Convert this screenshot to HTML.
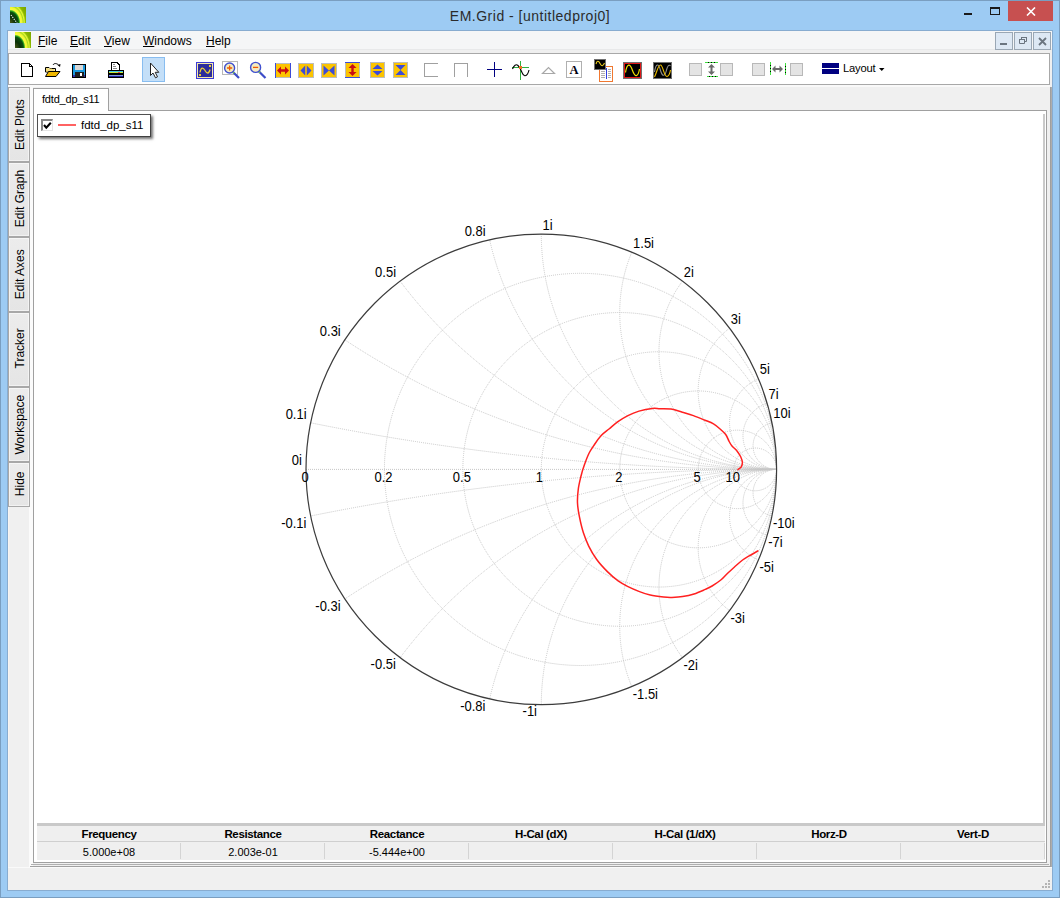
<!DOCTYPE html>
<html><head><meta charset="utf-8">
<style>
*{box-sizing:border-box}
html,body{margin:0;padding:0}
body{width:1060px;height:898px;overflow:hidden;position:relative;background:#9dcbf3;font-family:"Liberation Sans",sans-serif;color:#000}
.a{position:absolute}
#frame{left:0;top:0;width:1060px;height:898px;border:1px solid #7a9ec0}
#title{left:0;top:9px;width:1060px;text-align:center;font-size:14px;letter-spacing:.5px;color:#2b2b2b;line-height:14px;white-space:nowrap}
#client{left:7px;top:30px;width:1046px;height:861px;border:1px solid #88acd0;background:#f0f0f0}
#menubar{left:8px;top:31px;width:1044px;height:18px;background:#f5f6f7}
#menuband{left:8px;top:49px;width:1044px;height:4px;background:#efefef;border-top:1px solid #e8e9ea}
.mi{position:absolute;top:35px;font-size:12px;line-height:13px;white-space:nowrap}
.mi u{text-decoration:underline;text-decoration-thickness:1px;text-underline-offset:0.7px}
.mdib{position:absolute;top:32px;width:18px;height:18px;border:1px solid #9aa7b4;background:#dde8f4}
#toolbar{left:8px;top:53px;width:1042px;height:32px;background:#fff;border:1px solid #a8a8a8}
</style></head><body>
<div id="frame" class="a"></div>
<!-- title icon -->
<svg class="a" style="left:10px;top:7px" width="16" height="16" viewBox="0 0 16 16">
<defs><radialGradient id="ig" cx="0" cy="16" r="20" gradientUnits="userSpaceOnUse" gradientTransform="translate(0,16) scale(1,1.3) translate(0,-16)">
<stop offset="0" stop-color="#4a5a18"/><stop offset=".25" stop-color="#0a3008"/><stop offset=".42" stop-color="#0c5010"/><stop offset=".47" stop-color="#30b020"/><stop offset=".52" stop-color="#f8f840"/><stop offset=".6" stop-color="#f0f830"/><stop offset=".66" stop-color="#a8d820"/><stop offset=".71" stop-color="#e8f838"/><stop offset=".78" stop-color="#8ab800"/><stop offset="1" stop-color="#78a400"/></radialGradient></defs>
<rect width="16" height="16" fill="url(#ig)"/><path d="M1,8 L7,16" stroke="#e8e8e8" stroke-width="1.2" stroke-dasharray="1.2 1.2"/>
</svg>
<div id="title" class="a">EM.Grid - [untitledproj0]</div>
<!-- caption buttons -->
<div class="a" style="left:964px;top:13px;width:8px;height:2px;background:#1a1a1a"></div>
<div class="a" style="left:990px;top:7px;width:10px;height:8px;border:1px solid #1a1a1a;border-top-width:2px"></div>
<div class="a" style="left:1008px;top:1px;width:45px;height:20px;background:#c75050"></div>
<svg class="a" style="left:1026px;top:7px" width="10" height="9" viewBox="0 0 10 9"><path d="M1,0.5 L9,8.5 M9,0.5 L1,8.5" stroke="#fff" stroke-width="1.6"/></svg>
<div id="client" class="a"></div>
<div id="menubar" class="a"></div>
<div id="menuband" class="a"></div>
<svg class="a" style="left:15px;top:32px" width="16" height="16" viewBox="0 0 16 16">
<rect width="16" height="16" fill="url(#ig)"/>
</svg>
<div class="mi" style="left:38px"><u>F</u>ile</div>
<div class="mi" style="left:70px"><u>E</u>dit</div>
<div class="mi" style="left:104px"><u>V</u>iew</div>
<div class="mi" style="left:143px"><u>W</u>indows</div>
<div class="mi" style="left:206px"><u>H</u>elp</div>
<div class="mdib" style="left:995px"><div class="a" style="left:4px;top:10px;width:7px;height:2px;background:#6b7580"></div></div>
<div class="mdib" style="left:1014px"><svg class="a" style="left:3px;top:2px" width="10" height="10" viewBox="0 0 10 10"><path d="M3.5,2.5 h5 v4 h-2 M1.5,4.5 h5 v4 h-5 z M3.5,2.5 v2" fill="none" stroke="#6b7580" stroke-width="1"/><path d="M3,2 h6 v1 h-6z M1,4 h6 v1 h-6z" fill="#6b7580"/></svg></div>
<div class="mdib" style="left:1033px"><svg class="a" style="left:4px;top:4px" width="9" height="9" viewBox="0 0 9 9"><path d="M1,1 L8,8 M8,1 L1,8" stroke="#6b7580" stroke-width="1.8"/></svg></div>
<div id="toolbar" class="a"></div>
<svg class="a" style="left:0;top:0" width="1060" height="90" viewBox="0 0 1060 90" shape-rendering="crispEdges">
<!-- new doc -->
<path d="M21.5,63.5 H29.5 L32.5,66.5 V76.5 H21.5 Z" fill="#fff" stroke="#000" stroke-width="1"/>
<path d="M29.5,63.5 V66.5 H32.5" fill="none" stroke="#000" stroke-width="1"/>
<!-- open folder -->
<g shape-rendering="auto">
<path d="M45.5,67.5 H49 L50,68.5 H55.5 V72 H45.5 Z" fill="#f8f0b0" stroke="#000" stroke-width="1"/>
<path d="M46,68.5 h2 v1 h-2z M48,69.5 h2 v1 h-2z M50,68.5 h2 v1 h-2z M52,69.5 h2 v1 h-2z M46,70.5 h2 v1 h-2z M50,70.5 h2 v1 h-2z" fill="#e8c850"/>
<path d="M45.5,76.5 L48.5,71.5 H60 L56,76.5 Z" fill="#f0b800" stroke="#000" stroke-width="1"/>
<path d="M53,65 C54,63 57,63 59,65.5" fill="none" stroke="#000" stroke-width="1"/>
<path d="M57.5,65 L60,67 L60.5,64 Z" fill="#000"/>
</g>
<!-- floppy -->
<rect x="72" y="64" width="14" height="14" fill="#000"/>
<rect x="73" y="65" width="12" height="12" fill="#1a9ae0"/>
<rect x="75" y="65" width="8" height="5" fill="#d8d8d8"/>
<rect x="75" y="72" width="9" height="5" fill="#202020"/>
<rect x="80" y="73" width="2" height="3" fill="#fff"/>
<rect x="73" y="75" width="2" height="2" fill="#3030b0"/><rect x="84" y="75" width="1" height="2" fill="#3030b0"/>
<!-- printer -->
<path d="M111.5,62.5 H117 L119.5,65 V70.5 H111.5 Z" fill="#fff" stroke="#000"/>
<rect x="113" y="64" width="2" height="1" fill="#888"/><rect x="113" y="66" width="3" height="1" fill="#888"/><rect x="113" y="68" width="4" height="1" fill="#888"/>
<rect x="108" y="70" width="16" height="8" rx="1" fill="#000"/>
<rect x="109" y="71" width="14" height="2" fill="#40c8f0"/>
<rect x="109" y="72" width="14" height="1" fill="#c8e830"/>
<rect x="118" y="72" width="2" height="1" fill="#f04040"/>
<rect x="109" y="74" width="14" height="1" fill="#000"/>
<rect x="109" y="75" width="14" height="1" fill="#8098e0"/>
<rect x="109" y="76" width="14" height="1" fill="#2020a0"/>
<!-- select pressed -->
<rect x="142.5" y="57.5" width="22" height="24" fill="#c4dff8" stroke="#88bdf0"/>
<path d="M150.5,63 V75.5 L153,73 L155.5,77.8 L157.5,76.8 L155.2,72.3 H158.8 Z" fill="#fff" stroke="#222" stroke-width="1" shape-rendering="auto" stroke-linejoin="miter"/>
<!-- sine box -->
<rect x="196" y="62" width="18" height="17" fill="#3c3cd8"/>
<rect x="197" y="63" width="16" height="15" fill="#f4e8a8"/>
<rect x="198" y="64" width="14" height="13" fill="#2c2c9c"/>
<path d="M200,72.5 C201,67 203,67 205,70.5 C207,74 209,74 210,69.5" fill="none" stroke="#f0d030" stroke-width="1.3" shape-rendering="auto"/>
<rect x="209" y="65" width="2" height="2" fill="#f0d030"/><rect x="199" y="74" width="2" height="2" fill="#f0d030"/>
<!-- zoom in -->
<rect x="222.5" y="61.5" width="15" height="13" fill="none" stroke="#b8b8b8"/>
<g shape-rendering="auto">
<line x1="233" y1="72" x2="239" y2="78" stroke="#3c4cc8" stroke-width="2.2"/>
<line x1="232.8" y1="71.8" x2="234" y2="73" stroke="#80d040" stroke-width="2"/>
<circle cx="229.6" cy="68" r="5" fill="#f4ecc0" stroke="#4050d0" stroke-width="1.4"/>
<path d="M227,68 h5.2 M229.6,65.4 v5.2" stroke="#f05a00" stroke-width="1.3"/>
</g>
<!-- zoom out -->
<g shape-rendering="auto">
<line x1="259" y1="71.5" x2="265.5" y2="78" stroke="#3c4cc8" stroke-width="2.2"/>
<line x1="258.8" y1="71.3" x2="260" y2="72.5" stroke="#80d040" stroke-width="2"/>
<circle cx="255.6" cy="67.4" r="5" fill="#f4ecc0" stroke="#4050d0" stroke-width="1.4"/>
<path d="M253,67.4 h5.2" stroke="#f05a00" stroke-width="1.3"/>
</g>
<!-- yellow boxes -->
<rect x="275.5" y="63.5" width="15" height="14" fill="#fcc400" stroke="#bdbdbd"/>
<rect x="275" y="63" width="1" height="15" fill="#3c4cd8"/><rect x="290" y="63" width="1" height="15" fill="#3c4cd8"/>
<g shape-rendering="auto">
<path d="M277,70.5 L281,66.5 V69.3 H285 V66.5 L289,70.5 L285,74.5 V71.7 H281 V74.5 Z" fill="#c80c14"/>
</g>
<rect x="298.5" y="63.5" width="15" height="14" fill="#fcc400" stroke="#bdbdbd"/>
<g shape-rendering="auto"><path d="M300.5,70.5 L305.2,65.5 V75.5 Z M311.5,70.5 L306.8,65.5 V75.5 Z" fill="#3c4cd8"/></g>
<rect x="321.5" y="63.5" width="15" height="14" fill="#fcc400" stroke="#bdbdbd"/>
<g shape-rendering="auto"><path d="M323.5,65.5 L329,70.5 L323.5,75.5 Z M334.5,65.5 L329,70.5 L334.5,75.5 Z" fill="#3c4cd8"/></g>
<rect x="345.5" y="62.5" width="14" height="15" fill="#fcc400" stroke="#bdbdbd"/>
<rect x="345" y="62" width="15" height="1" fill="#3c4cd8"/><rect x="345" y="77" width="15" height="1" fill="#3c4cd8"/>
<g shape-rendering="auto"><path d="M352.5,64 L356.5,68 H353.7 V72 H356.5 L352.5,76 L348.5,72 H351.3 V68 H348.5 Z" fill="#c80c14"/></g>
<rect x="370.5" y="62.5" width="14" height="15" fill="#fcc400" stroke="#bdbdbd"/>
<g shape-rendering="auto"><path d="M372.5,69 L377.5,64.5 L382.5,69 Z M372.5,71 L377.5,75.5 L382.5,71 Z" fill="#3c4cd8"/></g>
<rect x="393.5" y="62.5" width="14" height="15" fill="#fcc400" stroke="#bdbdbd"/>
<g shape-rendering="auto"><path d="M395.5,65 H405.5 L400.5,70 Z M395.5,75 H405.5 L400.5,70 Z" fill="#3c4cd8"/></g>
<!-- brackets -->
<path d="M438,63.5 H424.5 V76.5 H438" fill="none" stroke="#a0a0a0"/>
<path d="M454.5,77 V63.5 H467.5 V77" fill="none" stroke="#a0a0a0"/>
<!-- plus -->
<rect x="487" y="69" width="15" height="1" fill="#000080"/><rect x="494" y="62" width="1" height="15" fill="#000080"/>
<rect x="487" y="69.5" width="15" height="0.6" fill="#000080" opacity=".5"/>
<!-- tracker -->
<rect x="520" y="61" width="1" height="19" fill="#30b040"/>
<rect x="512" y="67" width="17" height="1" fill="#30b040"/>
<g shape-rendering="auto">
<path d="M512.5,69 C514,65.5 516,63.5 518,65.5 C520,67.5 521,70 522,72.5 C523.5,76.5 526,76.5 527.5,74 C528.5,72.5 528.8,71 529,70" fill="none" stroke="#000" stroke-width="1.1"/>
</g>
<rect x="519" y="66" width="3" height="3" fill="#f07020"/>
<!-- triangle -->
<path d="M542.5,73.5 L548.5,67.5 L554.5,73.5 Z" fill="none" stroke="#a8a8a8" stroke-width="1.2" shape-rendering="auto"/>
<!-- A box -->
<rect x="566.5" y="61.5" width="15" height="16" fill="#fff" stroke="#b0b0b0"/>
<text x="573.9" y="74.3" text-anchor="middle" font-family="Liberation Serif, serif" font-weight="bold" font-size="12.5" fill="#000010" shape-rendering="auto">A</text>
<!-- legend icon -->
<rect x="599.5" y="66.5" width="13" height="15" fill="#fff" stroke="#f07830"/>
<rect x="601" y="69" width="4" height="1" fill="#b0b0b0"/><rect x="601" y="71" width="4" height="1" fill="#b0b0b0"/><rect x="601" y="73" width="4" height="1" fill="#b0b0b0"/><rect x="601" y="75" width="4" height="1" fill="#b0b0b0"/><rect x="601" y="77" width="4" height="1" fill="#b0b0b0"/>
<rect x="608" y="69" width="3" height="1" fill="#b0b0b0"/><rect x="608" y="71" width="3" height="1" fill="#b0b0b0"/><rect x="608" y="73" width="3" height="1" fill="#b0b0b0"/><rect x="608" y="75" width="3" height="1" fill="#b0b0b0"/><rect x="608" y="77" width="3" height="1" fill="#b0b0b0"/>
<rect x="606" y="68" width="1" height="11" fill="#3040e0"/>
<rect x="594.5" y="59.5" width="11" height="10" fill="#000" stroke="#707070"/>
<path d="M596,64 C597,60.5 598.5,60.5 600,63.5 C601.5,66.5 603,66.5 604.5,63" fill="none" stroke="#f0d020" stroke-width="1.1" shape-rendering="auto"/>
<!-- red sine -->
<rect x="623" y="62" width="19" height="17" fill="#707070"/>
<rect x="624" y="63" width="17" height="15" fill="#e01818"/>
<rect x="625" y="64" width="15" height="13" fill="#000"/>
<path d="M625.5,72.5 C627,63 630,63 632.5,70.5 C635,77.5 638,77.5 639.5,69" fill="none" stroke="#f0e000" stroke-width="1.2" shape-rendering="auto"/>
<!-- dual sine -->
<rect x="653" y="62" width="19" height="17" fill="#707070"/>
<rect x="654" y="63" width="17" height="15" fill="#000"/>
<g shape-rendering="auto" fill="none" stroke-width="1.1">
<path d="M654.5,72 C656,63 658.5,63 660.5,70.5 C662.5,77 665,77 666.5,70 C667.5,66 669,64 670.5,66" stroke="#909090"/>
<path d="M654.5,77 C657,72 658,65 660.5,65 C663,65 664,77 667,76.5 C669,76 670,73 670.5,70" stroke="#f0c000"/>
</g>
<!-- gray squares + spacing icons -->
<rect x="689.5" y="63.5" width="12" height="12" fill="#e4e4e4" stroke="#b8b8b8"/>
<rect x="720.5" y="63.5" width="12" height="12" fill="#e4e4e4" stroke="#b8b8b8"/>
<rect x="752.5" y="63.5" width="12" height="12" fill="#e4e4e4" stroke="#b8b8b8"/>
<rect x="790.5" y="63.5" width="12" height="12" fill="#e4e4e4" stroke="#b8b8b8"/>
<g>
<rect x="705" y="62" width="13" height="1" fill="#40e040"/><rect x="708" y="62" width="1" height="1" fill="#000"/><rect x="711" y="62" width="1" height="1" fill="#000"/><rect x="714" y="62" width="1" height="1" fill="#000"/>
<rect x="707" y="76" width="11" height="1" fill="#40e040"/><rect x="709" y="76" width="1" height="1" fill="#000"/><rect x="712" y="76" width="1" height="1" fill="#000"/><rect x="715" y="76" width="1" height="1" fill="#000"/>
<path d="M711.5,64 L715,67.5 H712.5 V71.5 H715 L711.5,75 L708,71.5 H710.5 V67.5 H708 Z" fill="#6a6a6a" shape-rendering="auto"/>
<rect x="770" y="62" width="1" height="13" fill="#40e040"/><rect x="770" y="65" width="1" height="1" fill="#000"/><rect x="770" y="68" width="1" height="1" fill="#000"/><rect x="770" y="71" width="1" height="1" fill="#000"/>
<rect x="785" y="63" width="1" height="12" fill="#40e040"/><rect x="785" y="66" width="1" height="1" fill="#000"/><rect x="785" y="69" width="1" height="1" fill="#000"/><rect x="785" y="72" width="1" height="1" fill="#000"/>
<path d="M772,69 L775.5,65.5 V68 H779.5 V65.5 L783,69 L779.5,72.5 V70 H775.5 V72.5 Z" fill="#6a6a6a" shape-rendering="auto"/>
</g>
<!-- layout -->
<rect x="822" y="63" width="17" height="5" fill="#000080"/>
<rect x="822" y="69" width="17" height="5" fill="#000080"/>
<path d="M879,68 H884.5 L881.75,71 Z" fill="#000" shape-rendering="auto"/>
</svg>
<div class="a" style="left:843px;top:62px;font-size:11.2px;line-height:12px;white-space:nowrap;letter-spacing:-0.2px">Layout</div>

<div class="a" style="left:8px;top:85px;width:1044px;height:782px;background:#f0f0f0"></div>
<div class="a" style="left:8px;top:85px;width:1px;height:782px;background:#f8f5f2"></div>
<div class="a" style="left:29px;top:85px;width:4px;height:782px;background:#fbfbfb"></div>
<div class="a" style="left:8px;top:85px;width:1042px;height:2px;background:#f9f9f9"></div>
<style>
.lt{position:absolute;left:8px;width:22px;height:75px;border:1px solid #a8a8a8;box-shadow:inset 0 0 0 1px rgba(255,255,255,.5);background:linear-gradient(#ececec,#e5e5e5)}
</style>
<div class="lt" style="top:87px"></div>
<div class="lt" style="top:162px"></div>
<div class="lt" style="top:237px"></div>
<div class="lt" style="top:312px"></div>
<div class="lt" style="top:387px"></div>
<div class="lt" style="top:462px;height:45px"></div>
<svg class="a" style="left:0;top:0" width="40" height="520" viewBox="0 0 40 520">
<g font-family="Liberation Sans, sans-serif" font-size="12" fill="#000">
<text transform="translate(24.2,150.0) rotate(-90)">Edit Plots</text>
<text transform="translate(24.2,227.3) rotate(-90)">Edit Graph</text>
<text transform="translate(24.2,299.3) rotate(-90)">Edit Axes</text>
<text transform="translate(24.2,368.5) rotate(-90)">Tracker</text>
<text transform="translate(24.2,454.6) rotate(-90)">Workspace</text>
<text transform="translate(24.2,496.2) rotate(-90)">Hide</text>
</g>
</svg>

<!-- outer stacked borders -->
<div class="a" style="left:1050px;top:87px;width:2px;height:780px;background:linear-gradient(to right,#999,#b4b4b4)"></div>
<div class="a" style="left:30px;top:866px;width:1021px;height:1px;background:#a0a0a0"></div>
<div class="a" style="left:31px;top:864px;width:1018px;height:1px;background:#b0b0b0"></div>
<!-- tab -->
<div class="a" style="left:33px;top:88px;width:76px;height:23px;border:1px solid #a0a0a0;border-bottom:none;background:#fff"></div>
<div class="a" style="left:42px;top:93px;font-size:11px;line-height:12px;white-space:nowrap;letter-spacing:-0.2px">fdtd_dp_s11</div>
<!-- plot window -->
<div class="a" style="left:33px;top:110px;width:1014px;height:753px;border:1px solid #a0a0a0;border-top:none;background:#fff"></div>
<div class="a" style="left:108px;top:110px;width:939px;height:1px;background:#a0a0a0"></div>
<div class="a" style="left:1043px;top:114px;width:2px;height:710px;background:#cacaca"></div>
<!-- legend -->
<div class="a" style="left:37px;top:114px;width:114px;height:23px;border:1px solid #505050;border-right-color:#404040;border-bottom-color:#404040;background:#fff;box-shadow:2px 2px 2.5px rgba(0,0,0,.55)"></div>
<div class="a" style="left:41px;top:119px;width:12px;height:12px;border:2px solid #868686;border-right:1px solid #e4e4e4;border-bottom:1px solid #e4e4e4;background:#fff"></div>
<svg class="a" style="left:43px;top:121px" width="9" height="9" viewBox="0 0 9 9"><path d="M1,4 L3.3,6.6 L7.8,1.8" fill="none" stroke="#000" stroke-width="2.1"/></svg>
<div class="a" style="left:58px;top:124px;width:18px;height:2px;background:#ff6262"></div>
<div class="a" style="left:81px;top:119px;font-size:11.5px;line-height:12px;white-space:nowrap">fdtd_dp_s11</div>

<svg id="smith" width="1060" height="898" viewBox="0 0 1060 898" style="position:absolute;left:0;top:0">
<defs><clipPath id="cl"><circle cx="541.3" cy="469.4" r="235.3"/></clipPath></defs>
<g clip-path="url(#cl)" fill="none" stroke="#c6c6c6" stroke-width="1" stroke-dasharray="1 1">
<circle cx="580.52" cy="469.40" r="196.08"/>
<circle cx="619.73" cy="469.40" r="156.87"/>
<circle cx="658.95" cy="469.40" r="117.65"/>
<circle cx="698.17" cy="469.40" r="78.43"/>
<circle cx="737.38" cy="469.40" r="39.22"/>
<circle cx="755.21" cy="469.40" r="21.39"/>
<circle cx="776.60" cy="-1883.60" r="2353.00"/>
<circle cx="776.60" cy="2822.40" r="2353.00"/>
<circle cx="776.60" cy="-314.93" r="784.33"/>
<circle cx="776.60" cy="1253.73" r="784.33"/>
<circle cx="776.60" cy="-1.20" r="470.60"/>
<circle cx="776.60" cy="940.00" r="470.60"/>
<circle cx="776.60" cy="175.27" r="294.12"/>
<circle cx="776.60" cy="763.52" r="294.12"/>
<circle cx="776.60" cy="234.10" r="235.30"/>
<circle cx="776.60" cy="704.70" r="235.30"/>
<circle cx="776.60" cy="312.53" r="156.87"/>
<circle cx="776.60" cy="626.27" r="156.87"/>
<circle cx="776.60" cy="351.75" r="117.65"/>
<circle cx="776.60" cy="587.05" r="117.65"/>
<circle cx="776.60" cy="390.97" r="78.43"/>
<circle cx="776.60" cy="547.83" r="78.43"/>
<circle cx="776.60" cy="422.34" r="47.06"/>
<circle cx="776.60" cy="516.46" r="47.06"/>
<circle cx="776.60" cy="435.79" r="33.61"/>
<circle cx="776.60" cy="503.01" r="33.61"/>
<circle cx="776.60" cy="445.87" r="23.53"/>
<circle cx="776.60" cy="492.93" r="23.53"/>
<line x1="306.00" y1="469.40" x2="776.60" y2="469.40"/>
</g>
<circle cx="541.3" cy="469.4" r="235.3" fill="none" stroke="#3c3c3c" stroke-width="1.2"/>
<path d="M757.9,550.9 C756.5,551.7 752.1,554.2 749.6,555.7 C747.1,557.2 745.0,558.2 742.6,560.0 C740.2,561.8 737.7,564.1 735.2,566.3 C732.8,568.5 730.2,570.8 727.9,573.0 C725.5,575.2 723.7,577.6 721.1,579.8 C718.5,582.0 714.7,584.4 712.1,586.0 C709.5,587.6 708.3,588.1 705.3,589.4 C702.3,590.7 697.8,592.8 694.0,594.0 C690.2,595.2 686.4,596.0 682.6,596.6 C678.8,597.2 674.5,597.3 671.3,597.4 C668.1,597.5 667.1,597.4 663.6,597.0 C660.1,596.6 654.2,595.9 650.2,595.0 C646.2,594.1 643.3,593.1 639.5,591.6 C635.7,590.1 631.1,588.1 627.5,586.3 C623.9,584.5 621.5,583.3 618.1,580.9 C614.8,578.5 611.0,575.2 607.4,571.6 C603.8,568.0 599.8,563.8 596.7,559.5 C593.6,555.2 590.9,550.6 588.7,546.1 C586.5,541.6 585.0,537.7 583.4,532.8 C581.8,527.9 580.4,521.7 579.4,516.7 C578.4,511.7 577.7,507.6 577.5,503.0 C577.3,498.4 577.7,493.6 578.3,489.0 C578.9,484.4 580.1,479.8 581.1,475.7 C582.1,471.6 583.2,468.3 584.5,464.6 C585.8,460.9 587.2,456.9 588.9,453.5 C590.6,450.1 592.5,447.5 594.5,444.5 C596.5,441.5 598.8,438.2 601.2,435.6 C603.6,433.0 606.2,431.3 609.0,429.0 C611.8,426.7 614.8,423.9 617.9,421.7 C621.0,419.5 624.4,417.4 627.9,415.6 C631.4,413.8 634.9,412.3 639.0,411.1 C643.1,409.9 648.9,408.8 652.4,408.4 C655.9,408.0 656.9,408.6 660.0,408.7 C663.1,408.8 667.4,408.5 671.1,409.1 C674.8,409.7 678.6,411.1 682.3,412.2 C686.0,413.3 689.7,414.3 693.4,415.6 C697.1,416.9 701.1,418.6 704.5,420.0 C707.9,421.4 710.9,422.4 713.5,423.9 C716.1,425.4 718.1,427.2 720.1,429.0 C722.1,430.8 724.2,432.5 725.7,434.5 C727.2,436.5 728.0,439.3 729.0,441.2 C730.0,443.1 730.5,444.1 731.8,445.7 C733.1,447.3 735.3,448.8 736.8,450.7 C738.3,452.6 739.8,454.9 740.7,456.8 C741.6,458.8 742.3,460.7 742.4,462.4 C742.5,464.1 742.0,465.6 741.3,466.8 C740.6,468.0 738.5,469.1 738.0,469.6" fill="none" stroke="#ff2020" stroke-width="1.5" stroke-linejoin="round" stroke-linecap="round"/>
<g font-family="Liberation Sans, sans-serif" font-size="13.8" fill="#000">
<text transform="translate(306.56,418.81) scale(0.94,1)" text-anchor="end">0.1i</text>
<text transform="translate(306.36,527.69) scale(0.94,1)" text-anchor="end">-0.1i</text>
<text transform="translate(340.76,335.88) scale(0.94,1)" text-anchor="end">0.3i</text>
<text transform="translate(340.56,610.62) scale(0.94,1)" text-anchor="end">-0.3i</text>
<text transform="translate(396.02,277.16) scale(0.94,1)" text-anchor="end">0.5i</text>
<text transform="translate(395.82,669.34) scale(0.94,1)" text-anchor="end">-0.5i</text>
<text transform="translate(485.55,235.84) scale(0.94,1)" text-anchor="end">0.8i</text>
<text transform="translate(485.35,710.66) scale(0.94,1)" text-anchor="end">-0.8i</text>
<text transform="translate(542.60,229.60) scale(0.94,1)" text-anchor="start">1i</text>
<text transform="translate(537.00,716.40) scale(0.94,1)" text-anchor="end">-1i</text>
<text transform="translate(633.10,247.70) scale(0.94,1)" text-anchor="start">1.5i</text>
<text transform="translate(632.80,698.70) scale(0.94,1)" text-anchor="start">-1.5i</text>
<text transform="translate(683.78,276.66) scale(0.94,1)" text-anchor="start">2i</text>
<text transform="translate(683.48,669.74) scale(0.94,1)" text-anchor="start">-2i</text>
<text transform="translate(730.84,323.72) scale(0.94,1)" text-anchor="start">3i</text>
<text transform="translate(730.54,622.68) scale(0.94,1)" text-anchor="start">-3i</text>
<text transform="translate(759.80,374.40) scale(0.94,1)" text-anchor="start">5i</text>
<text transform="translate(759.50,572.00) scale(0.94,1)" text-anchor="start">-5i</text>
<text transform="translate(768.49,399.02) scale(0.94,1)" text-anchor="start">7i</text>
<text transform="translate(768.19,547.38) scale(0.94,1)" text-anchor="start">-7i</text>
<text transform="translate(773.24,418.31) scale(0.94,1)" text-anchor="start">10i</text>
<text transform="translate(772.94,528.09) scale(0.94,1)" text-anchor="start">-10i</text>
<text transform="translate(301.90,465.40) scale(0.94,1)" text-anchor="end">0i</text>
<text transform="translate(305.00,482.10) scale(0.94,1)" text-anchor="middle">0</text>
<text transform="translate(383.43,482.10) scale(0.94,1)" text-anchor="middle">0.2</text>
<text transform="translate(461.87,482.10) scale(0.94,1)" text-anchor="middle">0.5</text>
<text transform="translate(539.30,482.10) scale(0.94,1)" text-anchor="middle">1</text>
<text transform="translate(618.73,482.10) scale(0.94,1)" text-anchor="middle">2</text>
<text transform="translate(697.17,482.10) scale(0.94,1)" text-anchor="middle">5</text>
<text transform="translate(732.82,482.10) scale(0.94,1)" text-anchor="middle">10</text>
</g>
</svg>
<style>
.th{position:absolute;top:826.5px;height:15px;width:144px;text-align:center;font-weight:bold;font-size:11.5px;line-height:15px;letter-spacing:-0.35px;white-space:nowrap}
.td{position:absolute;top:842.5px;height:18px;width:144px;text-align:center;font-size:11px;line-height:18px;white-space:nowrap}
.sep{position:absolute;top:843px;width:1px;height:16px;background:#d4d4d4}
</style>
<div class="a" style="left:37px;top:823px;width:1008px;height:37px;background:#efefef"></div>
<div class="a" style="left:37px;top:823px;width:1008px;height:3px;background:#c9c9c9"></div>
<div class="a" style="left:37px;top:841px;width:1008px;height:1px;background:#cfcfcf"></div>
<div class="th" style="left:37px">Frequency</div>
<div class="th" style="left:181px">Resistance</div>
<div class="th" style="left:325px">Reactance</div>
<div class="th" style="left:469px">H-Cal (dX)</div>
<div class="th" style="left:613px">H-Cal (1/dX)</div>
<div class="th" style="left:757px">Horz-D</div>
<div class="th" style="left:901px">Vert-D</div>
<div class="td" style="left:37px">5.000e+08</div>
<div class="td" style="left:181px">2.003e-01</div>
<div class="td" style="left:325px">-5.444e+00</div>
<div class="sep" style="left:180px"></div>
<div class="sep" style="left:324px"></div>
<div class="sep" style="left:468px"></div>
<div class="sep" style="left:612px"></div>
<div class="sep" style="left:756px"></div>
<div class="sep" style="left:900px"></div>
<div class="sep" style="left:1044px"></div>
<!-- status bar -->
<div class="a" style="left:8px;top:867px;width:1044px;height:23px;background:#f0f0f0;border-top:1px solid #fafafa"></div>
<svg class="a" style="left:1040px;top:878px" width="12" height="12" viewBox="0 0 12 12" fill="#b4b4b4">
<rect x="8" y="2" width="2" height="2"/><rect x="5" y="5" width="2" height="2"/><rect x="8" y="5" width="2" height="2"/><rect x="2" y="8" width="2" height="2"/><rect x="5" y="8" width="2" height="2"/><rect x="8" y="8" width="2" height="2"/>
</svg>

</body></html>
